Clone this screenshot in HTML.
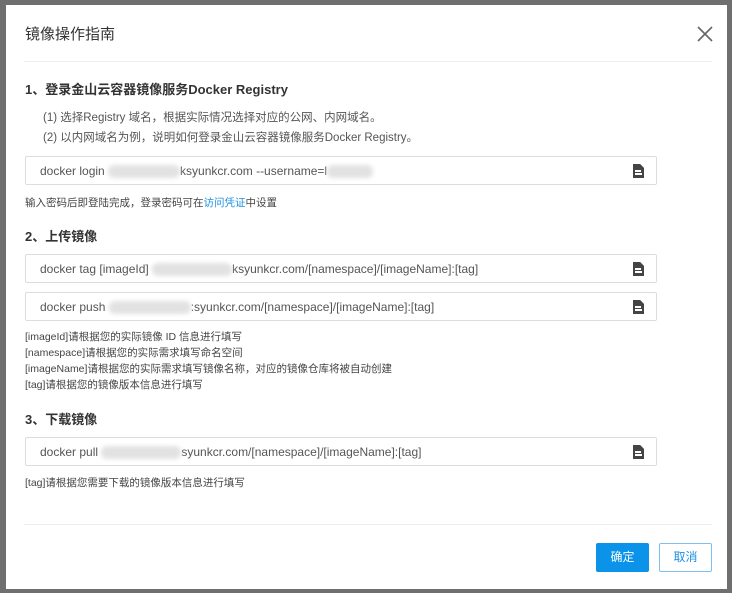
<!DOCTYPE html>
<html><head><meta charset="utf-8"><style>
*{margin:0;padding:0;box-sizing:border-box}
body{width:732px;height:593px;background:#6f6f6f;font-family:"Liberation Sans","Noto Sans CJK SC",sans-serif;color:#333;position:relative;overflow:hidden}
.dlg{position:absolute;left:6px;top:5px;width:721px;height:584px;background:#fff}
.a{position:absolute;white-space:nowrap}
.t{font-size:15px;color:#333}
.h{font-size:13px;font-weight:bold;color:#333}
.s{font-size:11.5px;color:#555}
.n{font-size:10.5px;color:#444}
.box{position:absolute;left:19px;width:632px;height:29px;border:1px solid #ddd;border-radius:2px;font-size:12px;color:#555;padding:7px 0 0 14px;white-space:nowrap}
.blur{display:inline-block;height:13px;background:#e2e2e2;filter:blur(2px);vertical-align:middle;border-radius:6px}
.ic{position:absolute;right:12px;top:7px;width:11px;height:14px;background:#444;clip-path:polygon(0 0,65% 0,100% 28%,100% 100%,0 100%)}
.ic i{position:absolute;left:2px;height:1.5px;background:#fff}
.line{position:absolute;left:18px;width:688px;height:1px;background:#eee}
.btn{position:absolute;top:538px;width:53px;height:29px;border-radius:2px;font-size:12px;text-align:center;line-height:29px}
</style></head><body>
<div class="dlg">
<div class="a t" style="left:19px;top:18px">镜像操作指南</div>
<svg class="a" style="left:691px;top:21px" width="16" height="16" viewBox="0 0 16 16"><path d="M1 1L15 15M15 1L1 15" stroke="#666" stroke-width="1.6"/></svg>
<div class="line" style="top:56px"></div>
<div class="a h" style="left:19px;top:74px">1、登录金山云容器镜像服务Docker Registry</div>
<div class="a s" style="left:37px;top:104px">(1) 选择Registry 域名，根据实际情况选择对应的公网、内网域名。</div>
<div class="a s" style="left:37px;top:124px">(2) 以内网域名为例，说明如何登录金山云容器镜像服务Docker Registry。</div>
<div class="box" style="top:151px">docker login <span class="blur" style="width:72px"></span>ksyunkcr.com --username=l<span class="blur" style="width:46px"></span><div class="ic"><i style="top:6px;width:6px"></i><i style="top:9px;width:7px"></i></div></div>
<div class="a n" style="left:19px;top:190px">输入密码后即登陆完成，登录密码可在<span style="color:#1e8fe1">访问凭证</span>中设置</div>
<div class="a h" style="left:19px;top:221px">2、上传镜像</div>
<div class="box" style="top:249px">docker tag [imageId] <span class="blur" style="width:80px"></span>ksyunkcr.com/[namespace]/[imageName]:[tag]<div class="ic"><i style="top:6px;width:6px"></i><i style="top:9px;width:7px"></i></div></div>
<div class="box" style="top:287px">docker push <span class="blur" style="width:82px"></span>:syunkcr.com/[namespace]/[imageName]:[tag]<div class="ic"><i style="top:6px;width:6px"></i><i style="top:9px;width:7px"></i></div></div>
<div class="a n" style="left:19px;top:324px;line-height:16px">[imageId]请根据您的实际镜像 ID 信息进行填写<br>[namespace]请根据您的实际需求填写命名空间<br>[imageName]请根据您的实际需求填写镜像名称，对应的镜像仓库将被自动创建<br>[tag]请根据您的镜像版本信息进行填写</div>
<div class="a h" style="left:19px;top:404px">3、下载镜像</div>
<div class="box" style="top:432px">docker pull <span class="blur" style="width:80px"></span>syunkcr.com/[namespace]/[imageName]:[tag]<div class="ic"><i style="top:6px;width:6px"></i><i style="top:9px;width:7px"></i></div></div>
<div class="a n" style="left:19px;top:470px">[tag]请根据您需要下载的镜像版本信息进行填写</div>
<div class="line" style="top:519px"></div>
<div class="btn" style="left:590px;top:538px;background:#0a93e8;color:#fff">确定</div>
<div class="btn" style="left:653px;top:538px;border:1px solid #7cc0f2;color:#1e8fe1;line-height:27px">取消</div>
</div>
</body></html>
